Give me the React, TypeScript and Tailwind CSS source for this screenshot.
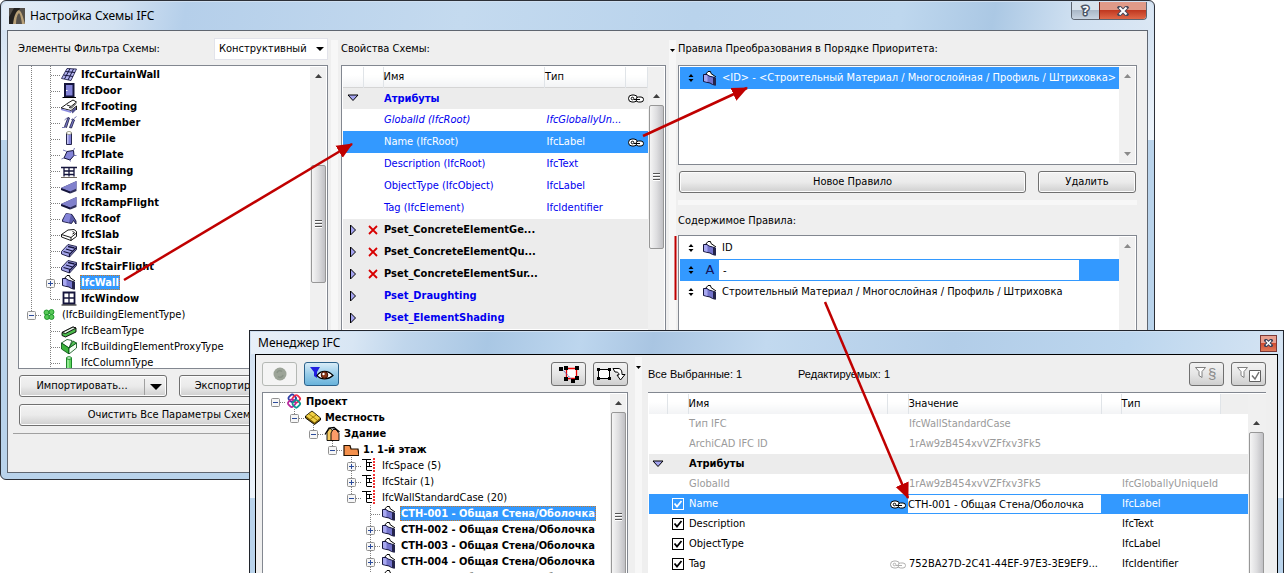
import React, { useState } from "react";

type Guide = "blank" | "line" | "tee" | "end" | "root";

type TreeNode = {
  label: string;
  icon: string;
  guides: Guide[];
  toggle?: "plus" | "minus";
  bold?: boolean;
  selected?: boolean;
};

const schemeTree: TreeNode[] = [
  { label: "IfcCurtainWall", icon: "curtain", guides: ["line", "tee"], bold: true },
  { label: "IfcDoor", icon: "door", guides: ["line", "tee"], bold: true },
  { label: "IfcFooting", icon: "footing", guides: ["line", "tee"], bold: true },
  { label: "IfcMember", icon: "member", guides: ["line", "tee"], bold: true },
  { label: "IfcPile", icon: "pile", guides: ["line", "tee"], bold: true },
  { label: "IfcPlate", icon: "plate", guides: ["line", "tee"], bold: true },
  { label: "IfcRailing", icon: "railing", guides: ["line", "tee"], bold: true },
  { label: "IfcRamp", icon: "ramp", guides: ["line", "tee"], bold: true },
  { label: "IfcRampFlight", icon: "ramp", guides: ["line", "tee"], bold: true },
  { label: "IfcRoof", icon: "roof", guides: ["line", "tee"], bold: true },
  { label: "IfcSlab", icon: "slab", guides: ["line", "tee"], bold: true },
  { label: "IfcStair", icon: "stair", guides: ["line", "tee"], bold: true },
  { label: "IfcStairFlight", icon: "stair", guides: ["line", "tee"], bold: true },
  { label: "IfcWall", icon: "wall", guides: ["line", "tee"], toggle: "plus", bold: true, selected: true },
  { label: "IfcWindow", icon: "window", guides: ["line", "end"], bold: true },
  { label: "(IfcBuildingElementType)", icon: "type", guides: ["end"], toggle: "minus" },
  { label: "IfcBeamType", icon: "beamType", guides: ["blank", "tee"] },
  { label: "IfcBuildingElementProxyType", icon: "proxyType", guides: ["blank", "tee"] },
  { label: "IfcColumnType", icon: "columnType", guides: ["blank", "tee"] },
];

const projectTree: TreeNode[] = [
  { label: "Проект", icon: "project", guides: ["root"], toggle: "minus", bold: true },
  { label: "Местность", icon: "site", guides: ["blank", "end"], toggle: "minus", bold: true },
  { label: "Здание", icon: "building", guides: ["blank", "blank", "end"], toggle: "minus", bold: true },
  { label: "1. 1-й этаж", icon: "storey", guides: ["blank", "blank", "blank", "end"], toggle: "minus", bold: true },
  { label: "IfcSpace (5)", icon: "group", guides: ["blank", "blank", "blank", "blank", "tee"], toggle: "plus" },
  { label: "IfcStair (1)", icon: "group", guides: ["blank", "blank", "blank", "blank", "tee"], toggle: "plus" },
  { label: "IfcWallStandardCase (20)", icon: "group", guides: ["blank", "blank", "blank", "blank", "end"], toggle: "minus" },
  { label: "СТН-001 - Общая Стена/Оболочка", icon: "wall", guides: ["blank", "blank", "blank", "blank", "blank", "tee"], bold: true, selected: true },
  { label: "СТН-002 - Общая Стена/Оболочка", icon: "wall", guides: ["blank", "blank", "blank", "blank", "blank", "tee"], toggle: "plus", bold: true },
  { label: "СТН-003 - Общая Стена/Оболочка", icon: "wall", guides: ["blank", "blank", "blank", "blank", "blank", "tee"], toggle: "plus", bold: true },
  { label: "СТН-004 - Общая Стена/Оболочка", icon: "wall", guides: ["blank", "blank", "blank", "blank", "blank", "tee"], toggle: "plus", bold: true },
  { label: "СТН-005 - Общая Стена/Оболочка", icon: "wall", guides: ["blank", "blank", "blank", "blank", "blank", "tee"], toggle: "plus", bold: true },
];

const schemeProps = [
  { name: "Атрибуты", type: "", kind: "open", link: true },
  { name: "GlobalId (IfcRoot)", type: "IfcGloballyUn...", kind: "italic" },
  { name: "Name (IfcRoot)", type: "IfcLabel", kind: "selected", link: true },
  { name: "Description (IfcRoot)", type: "IfcText", kind: "plain" },
  { name: "ObjectType (IfcObject)", type: "IfcLabel", kind: "plain" },
  { name: "Tag (IfcElement)", type: "IfcIdentifier", kind: "plain" },
  { name: "Pset_ConcreteElementGe...", type: "", kind: "denied" },
  { name: "Pset_ConcreteElementQu...", type: "", kind: "denied" },
  { name: "Pset_ConcreteElementSur...", type: "", kind: "denied" },
  { name: "Pset_Draughting", type: "", kind: "closed" },
  { name: "Pset_ElementShading", type: "", kind: "closed" },
];

const elementProps = [
  { name: "Тип IFC", value: "IfcWallStandardCase", type: "", kind: "disabled" },
  { name: "ArchiCAD IFC ID", value: "1rAw9zB454xvVZFfxv3Fk5", type: "", kind: "disabled" },
  { name: "Атрибуты", value: "", type: "", kind: "group" },
  { name: "GlobalId", value: "1rAw9zB454xvVZFfxv3Fk5", type: "IfcGloballyUniqueId", kind: "disabled" },
  { name: "Name", value: "СТН-001 - Общая Стена/Оболочка", type: "IfcLabel", kind: "selected" },
  { name: "Description", value: "", type: "IfcText", kind: "check" },
  { name: "ObjectType", value: "", type: "IfcLabel", kind: "check" },
  { name: "Tag", value: "752BA27D-2C41-44EF-97E3-3E9EF9...", type: "IfcIdentifier", kind: "check" },
];

const dark = "#14143c";
const blue = "#8484d8";

const icons: Record<string, React.ReactNode> = {
  curtain: (
    <g stroke={dark} strokeWidth="0.8">
      <path d="M6 2.500L15.500 3 10 14.500 0.500 12.500z" fill="#b4b4f0" />
      <path d="M9 2.500L3.500 13M12.500 3L7 14M4.500 5.500l9.500 1M2.500 9l9.500 1.500" fill="none" strokeWidth="1" />
    </g>
  ),
  door: (
    <g>
      <path d="M4 2h8.500v12.500H4z" fill={blue} stroke={dark} strokeWidth="2" />
      <path d="M1.500 15.500h13.500" stroke="#000" />
      <path d="M5 8.500h1.500" stroke="#fff" />
    </g>
  ),
  footing: (
    <g>
      <path d="M0 10l7-5 5-3 3.500 2v6L12 15 0 11.500z" fill="#fff" />
      <path d="M0 10l10 2.500L15.500 8M0 10l7-5 5-3 3.500 2L10 8.500 6 7" fill="none" stroke="#000" strokeWidth="0.900" />
      <path d="M8 9.500l2.500.500L15 5.500M15.500 8v4" fill="none" stroke="#000" strokeWidth="0.900" />
      <path d="M0 10.500l10 2.500v2L0 12z" fill="#8c8ce0" />
      <path d="M10 13l5-4v3l-3.500 3.500z" fill="#50508c" />
    </g>
  ),
  member: (
    <g stroke={dark} strokeWidth="0.800">
      <path d="M7 3.500L3.500 12.500l2 1L8.500 4zM12 5l-3.500 8.500 2 .500L13.500 6z" fill="#7c7ccc" />
      <path d="M1 13.500h3M13 4.500l2.500-2M3.500 6l3-2.500M10 6l2-1.500" stroke="#5656a0" />
    </g>
  ),
  pile: (
    <g>
      <path d="M5.500 3v11.500h5V3z" fill={blue} stroke={dark} strokeWidth="0.900" />
      <path d="M6 4h1.500v10H6z" fill="#c4c4f4" />
      <ellipse cx="8" cy="3" rx="2.500" ry="1.500" fill="#fff" stroke="#8a8a70" strokeWidth="0.800" />
    </g>
  ),
  plate: (
    <g>
      <path d="M6 5.500l6.500-1 .500 5-4 4.500-6-2z" fill={blue} stroke={dark} />
      <path d="M2 4l4 1.500M12.500 4.500L13.500 2M0.500 13l2.500-1M13 9.500l2.500 0M9 14l.500 1.500" stroke="#5656a0" strokeWidth="0.800" />
    </g>
  ),
  railing: (
    <g fill="none" stroke={dark} strokeWidth="1.300">
      <path d="M0 5.500h16M3 5.500v9M8 5.500v9M13 5.500v9M3 9h10M3 12.500h10" />
      <path d="M0 15.500h16" stroke="#706860" strokeWidth="1" />
    </g>
  ),
  ramp: (
    <g>
      <path d="M0 10L15.500 3v10l-6 2.500z" fill="#30305c" />
      <path d="M0 10L15.500 3v7.500L9 13.500z" fill="#8080cc" />
      <path d="M0 10l9 3.500v2L0 12z" fill={dark} />
    </g>
  ),
  roof: (
    <g>
      <path d="M1.500 10L5 3.500l6 1 4 6.500v3l-2.500-3.500-2 3-9-2z" fill="#5c5cac" stroke={dark} strokeWidth="0.900" />
      <path d="M5 3.500l5 1-2 8-6-1.500z" fill={blue} />
    </g>
  ),
  slab: (
    <g stroke="#000" strokeWidth="0.900">
      <path d="M0.500 8.500L7 4l6-.500 2.500 2v5L10 14.500.500 11z" fill="#fff" />
      <path d="M0.500 8.500l9.500 3 5.500-4.500M10 11.500v3M11.500 5l2 2-2 1" fill="none" />
    </g>
  ),
  stair: (
    <g stroke={dark} strokeWidth="0.900">
      <path d="M7 2.500l8.500 2v3L8.500 15 .500 12V9.500z" fill="#a4a4e8" />
      <path d="M7 4.500l6.500 1.500M5 7l6.500 2M2.500 9.500l7 2M8.500 15v-2.500l7-7" fill="none" strokeWidth="1.300" />
    </g>
  ),
  wall: (
    <g>
      <path d="M3 5l3-3.500h2.500L9 3.500 14 7" fill="#fff" stroke="#000" />
      <path d="M1.500 4.500h3.500l2 1.500 3.500 1 3 1v7l-3-.500L8 13l-6.500-1.500z" fill="#7474cc" stroke={dark} />
      <path d="M2 5h2.500l1 1v6L2 11z" fill="#a8a8f0" />
      <path d="M11 7.500l3 .500v7.500L11 15z" fill="#24244c" />
    </g>
  ),
  window: (
    <g>
      <path d="M2.500 2.500h11v11h-11z" fill="#fff" stroke={dark} strokeWidth="1.800" />
      <path d="M8 2v12M2.500 8h11" stroke={dark} strokeWidth="1.300" />
      <path d="M0.500 15h15" stroke="#000" strokeWidth="1" />
    </g>
  ),
  type: (
    <g fill="#58c858" stroke="#0c8a1c" strokeWidth="0.800">
      <circle cx="4.500" cy="6.500" r="2.500" />
      <circle cx="9.500" cy="6" r="2.500" />
      <circle cx="5" cy="11" r="2.500" />
      <circle cx="9.500" cy="11" r="2.500" />
    </g>
  ),
  beamType: (
    <g stroke="#000" strokeWidth="0.900">
      <path d="M1 10.500L12 5l3 1v4L4.500 15 1 13.500z" fill="#4cb84c" />
      <path d="M1 10.500L12 5l3 1L4.500 11.500z" fill="#e8f8e8" />
    </g>
  ),
  proxyType: (
    <g stroke="#004a10" strokeWidth="0.800">
      <path d="M0.500 5L6 1.500l5 1L8 10z" fill="#fff" />
      <path d="M0.500 5L8 10v6L.500 11z" fill="#3cb43c" />
      <path d="M8 10l7.500-5v5L8 16z" fill="#f2fff2" />
      <path d="M8 10l4-7 3.500 2z" fill="#58c858" />
    </g>
  ),
  columnType: (
    <g stroke="#0a7a1a" strokeWidth="0.900">
      <path d="M5.500 4v11.500h5V4z" fill="#5ed45e" />
      <path d="M7 5v10" stroke="#d0ffd0" />
      <ellipse cx="8" cy="4" rx="2.500" ry="1.300" fill="#d8ffd8" />
    </g>
  ),
  project: (
    <g fill="none" strokeWidth="1.800">
      <rect x="3" y="2" width="6.500" height="6.500" rx="2" stroke="#3040a8" transform="rotate(45 6.200 5.200)" />
      <rect x="7" y="2.500" width="6.500" height="6.500" rx="2" stroke="#f02848" transform="rotate(45 10.200 5.800)" />
      <rect x="2.500" y="7" width="6.500" height="6.500" rx="2" stroke="#b8289c" transform="rotate(45 5.800 10.200)" />
      <rect x="7" y="7.500" width="6.500" height="6.500" rx="2" stroke="#109890" transform="rotate(45 10.200 10.800)" />
    </g>
  ),
  site: (
    <g strokeWidth="0.900">
      <path d="M0.500 7L7 2l8.500 7v2L9.500 15.500.500 9z" fill="#7a5c00" stroke="#000" />
      <path d="M1 7l6-4.500L15 9l-5.500 4.500z" fill="#f0d048" />
      <path d="M5 10.500L11 6M4 5l8 6" stroke="#9a7800" />
    </g>
  ),
  building: (
    <g stroke="#000" strokeWidth="0.900">
      <path d="M3 7l3-4 3.500 4v8.500H3z" fill="#f4c860" />
      <path d="M7 15.500V8l2-3.500h3l3 4v7z" fill="#fc9c68" />
      <path d="M1 9.500L5 3l5-.500L15.500 7" fill="none" strokeWidth="1.300" />
    </g>
  ),
  storey: <path d="M1 4.500h6l1 3.500h7l1 6.500H1z" fill="#f4904c" stroke="#201000" strokeWidth="1.200" />,
  group: (
    <g fill="none">
      <path d="M0 2.500h9M4.500 2.500v11M5 5.500h5M7.500 5.500v4M5 9.500h5M5 13.500h5" stroke="#000" />
      <path d="M12 1v15" stroke="#f00000" strokeWidth="1.600" strokeDasharray="2 1" />
    </g>
  ),
};

const Icon = ({ name }: { name: string }) => (
  <svg viewBox="0 0 16 16" className="h-4 w-4 shrink-0" aria-hidden="true">
    {icons[name]}
  </svg>
);

const GuideCell = ({ guide, toggle }: { guide: Guide; toggle?: "plus" | "minus" }) => {
  const horizontal = guide === "tee" || guide === "end" || guide === "root";
  return (
    <svg viewBox="0 0 19 16" className="h-4 w-[19px] shrink-0" aria-hidden="true">
      {(guide === "line" || guide === "tee") && <path d="M9.500 0v16" stroke="#808080" strokeDasharray="1 1" />}
      {guide === "end" && <path d="M9.500 0v9" stroke="#808080" strokeDasharray="1 1" />}
      {horizontal && <path d="M10 9.500h9" stroke="#808080" strokeDasharray="1 1" />}
      {toggle && (
        <g>
          <rect x="5.500" y="5.500" width="8" height="8" rx="1" fill="#f6f6f6" stroke="#919191" />
          <path d="M7 9.500h5" stroke="#2b4b9b" />
          {toggle === "plus" && <path d="M9.500 7v5" stroke="#2b4b9b" />}
        </g>
      )}
    </svg>
  );
};

const Tree = ({ nodes }: { nodes: TreeNode[] }) => (
  <ul className="min-w-0 flex-1 overflow-hidden pl-[3px]">
    {nodes.map((node) => (
      <li key={node.label} className="flex h-4 items-center whitespace-nowrap">
        {node.guides.map((guide, i) => (
          <GuideCell key={i} guide={guide} toggle={i === node.guides.length - 1 ? node.toggle : undefined} />
        ))}
        <span className="ml-px flex items-center gap-[3px]">
          <Icon name={node.icon} />
          <span
            className={`px-px pt-px leading-[14px] ${node.bold ? "font-bold" : ""} ${
              node.selected ? "bg-[#3399ff] text-white outline-1 -outline-offset-1 outline-dotted outline-[#c87828]" : ""
            }`}
          >
            {node.label}
          </span>
        </span>
      </li>
    ))}
  </ul>
);

const Triangle = ({ dir, className }: { dir: "up" | "down"; className?: string }) => (
  <svg viewBox="0 0 7 4" className={`h-1 w-[7px] ${className ?? ""}`} aria-hidden="true">
    <path d={dir === "up" ? "M0 4l3.500-4L7 4z" : "M0 0l3.500 4L7 0z"} fill="currentColor" />
  </svg>
);

// offset and thumb are the classes that size the gap over the thumb and the thumb itself
const ScrollBar = ({ offset = "h-0", thumb, muted }: { offset?: string; thumb?: string; muted?: boolean }) => (
  <div className={`flex w-4 shrink-0 flex-col items-center bg-[#f0f0f0] ${muted ? "text-[#8a8a8a]" : "text-[#404040]"}`}>
    <div className="flex h-[18px] shrink-0 items-center">
      <Triangle dir="up" />
    </div>
    <div className={`shrink-0 ${offset}`} />
    {thumb && (
      <div
        className={`flex w-[15px] shrink-0 flex-col items-center justify-center gap-px rounded-xs border border-[#979797] bg-linear-to-r from-[#f5f5f5] via-[#dedee0] to-[#c0c0c4] ${thumb}`}
      >
        <span className="h-0.5 w-[7px] border-t border-[#555] bg-white" />
        <span className="h-0.5 w-[7px] border-t border-[#555] bg-white" />
        <span className="h-0.5 w-[7px] border-t border-[#555] bg-white" />
      </div>
    )}
    <div className="flex-1" />
    <div className="flex h-[18px] shrink-0 items-center">
      <Triangle dir="down" />
    </div>
  </div>
);

const Chain = ({ faded }: { faded?: boolean }) => (
  <svg viewBox="0 0 16 9" className={`h-[9px] w-4 ${faded ? "opacity-30" : ""}`} aria-hidden="true">
    <rect x="0.500" y="1" width="9" height="7" rx="3.500" fill="#fff" stroke="#000" />
    <rect x="8" y="3" width="7.500" height="5" rx="2.500" fill="#fff" stroke="#000" />
    <circle cx="4.500" cy="4.500" r="1.300" fill="#fff" stroke="#000" />
    <path d="M6 5.500h6" stroke="#000" />
  </svg>
);

const OpenMark = () => (
  <svg viewBox="0 0 12 8" className="h-2 w-3" aria-hidden="true">
    <path d="M1 1h10L6 6.500z" fill="#a4a4f0" stroke="#000" />
  </svg>
);

const ClosedMark = () => (
  <svg viewBox="0 0 8 12" className="h-3 w-2" aria-hidden="true">
    <path d="M1.500 1v10l5-5z" fill="#a4a4f0" stroke="#000" />
  </svg>
);

const SortMark = () => (
  <svg viewBox="0 0 6 10" className="h-2.5 w-1.5 shrink-0" aria-hidden="true">
    <path d="M0.500 4L3 1l2.500 3zM0.500 6L3 9l2.500-3z" fill="#000" />
  </svg>
);

const PushButton = ({ children, className }: { children: React.ReactNode; className: string }) => (
  <button
    className={`flex h-[22px] items-center justify-center overflow-hidden rounded-[3px] border border-[#707070] bg-linear-to-b from-[#f2f2f2] from-0% via-[#ebebeb] via-50% to-[#cfcfcf] pt-px whitespace-nowrap shadow-[inset_0_0_0_1px_#fcfcfc] ${className}`}
  >
    {children}
  </button>
);

const MenuButton = ({ label }: { label: string }) => (
  <PushButton className="w-[148px]">
    <span className="flex-1">{label}</span>
    <span className="flex h-4 w-[22px] items-center justify-center border-l border-[#a0a0a0]">
      <svg viewBox="0 0 12 6" className="h-1.5 w-3" aria-hidden="true">
        <path d="M0 0h12L6 6z" fill="#000" />
      </svg>
    </span>
  </PushButton>
);

const ToolButton = ({ label, state = "normal", children }: { label: string; state?: string; children: React.ReactNode }) => {
  const look =
    state === "active"
      ? "border-[#2c628b] bg-linear-to-b from-[#d8ecf8] via-[#98cce8] to-[#68b3db]"
      : state === "disabled"
        ? "border-[#b4b8b4] bg-[#f4f4f4]"
        : "border-[#707070] bg-linear-to-b from-[#f2f2f2] via-[#e6e6e6] to-[#cfcfcf]";
  return (
    <button aria-label={label} className={`flex h-6 w-[35px] items-center justify-center rounded-[3px] border ${look}`}>
      {children}
    </button>
  );
};

const Splitter = ({ className, marker }: { className: string; marker?: boolean }) => (
  <div className={`flex shrink-0 flex-col items-center ${className}`}>
    <div className="flex w-[7px] flex-1 justify-center bg-[#f7f7f7]">
      {marker && (
        <svg viewBox="0 0 5 3" className="mt-[9px] h-[3px] w-[5px]" aria-hidden="true">
          <path d="M0 0h5L2.500 3z" fill="#000" />
        </svg>
      )}
    </div>
  </div>
);

const headCell = "border-r border-[#e0e4e8] bg-linear-to-b from-white from-40% to-[#f2f3f5] pt-px text-left font-normal";

const SchemeTable = () => (
  <table className="min-w-0 flex-1 table-fixed border-collapse">
    <colgroup>
      <col className="w-5" />
      <col className="w-5" />
      <col />
      <col className="w-[81px]" />
      <col className="w-[22px]" />
    </colgroup>
    <thead>
      <tr className="h-5 border-b border-[#d5d5d5]">
        <th className={headCell} />
        <th className={headCell} />
        <th className={headCell}>Имя</th>
        <th className={headCell}>Тип</th>
        <th className={headCell} />
      </tr>
    </thead>
    <tbody>
      {schemeProps.map((row) => {
        const group = row.kind === "open" || row.kind === "closed" || row.kind === "denied";
        const tone =
          row.kind === "selected" ? "bg-[#3399ff] text-white" : row.kind === "denied" ? "text-black" : "text-[#0000f0]";
        return (
          <tr
            key={row.name}
            className={`h-[22px] whitespace-nowrap ${tone} ${group ? "bg-[#ececec] font-bold" : ""} ${
              row.kind === "italic" ? "italic" : ""
            }`}
          >
            <td>
              <span className="flex justify-center">
                {row.kind === "open" && <OpenMark />}
                {(row.kind === "closed" || row.kind === "denied") && <ClosedMark />}
              </span>
            </td>
            <td>
              {row.kind === "denied" && (
                <svg viewBox="0 0 10 10" className="mx-auto h-2.5 w-2.5" aria-hidden="true">
                  <path d="M1 1l8 8M9 1L1 9" stroke="#d80000" strokeWidth="1.800" />
                </svg>
              )}
            </td>
            <td className="pt-px pl-px">{row.name}</td>
            <td className="pt-px pl-0.5">{row.type}</td>
            <td>
              <span className="flex justify-end pr-1">{row.link && <Chain />}</span>
            </td>
          </tr>
        );
      })}
    </tbody>
  </table>
);

const ElementTable = () => {
  const [name, setName] = useState(elementProps[4].value);
  const [checked, setChecked] = useState<Record<string, boolean>>({
    Name: true,
    Description: true,
    ObjectType: true,
    Tag: true,
  });

  return (
    <table className="min-w-0 flex-1 table-fixed border-collapse">
      <colgroup>
        <col className="w-[18px]" />
        <col className="w-[21px]" />
        <col className="w-[199px]" />
        <col className="w-[21px]" />
        <col />
        <col className="w-5" />
        <col className="w-[99px]" />
        <col className="w-7" />
      </colgroup>
      <thead>
        <tr className="h-5">
          <th className={headCell} />
          <th className={headCell} />
          <th className={headCell}>Имя</th>
          <th className={headCell} />
          <th className={headCell}>Значение</th>
          <th className={headCell} />
          <th className={headCell}>Тип</th>
          <th className="bg-[#efefef]" />
        </tr>
      </thead>
      <tbody>
        {elementProps.map((row) => {
          const selected = row.kind === "selected";
          const tone =
            row.kind === "disabled"
              ? "text-[#9a9a9a]"
              : selected
                ? "bg-[#3399ff] text-white"
                : row.kind === "group"
                  ? "bg-[#ececec] font-bold"
                  : "";
          return (
            <tr key={row.name} className={`h-5 whitespace-nowrap ${tone}`}>
              <td>
                <span className="flex justify-center">{row.kind === "group" && <OpenMark />}</span>
              </td>
              <td>
                {row.name in checked && (
                  <span className="relative flex justify-center">
                    <input
                      type="checkbox"
                      aria-label={row.name}
                      checked={checked[row.name]}
                      onChange={() => setChecked({ ...checked, [row.name]: !checked[row.name] })}
                      className={`h-3 w-3 appearance-none border ${selected ? "border-white" : "border-black bg-white"}`}
                    />
                    {checked[row.name] && (
                      <svg viewBox="0 0 12 12" className="pointer-events-none absolute h-3 w-3" aria-hidden="true">
                        <path d="M2.500 5.500l2.500 3 4.500-5.500" fill="none" stroke="currentColor" strokeWidth="1.800" />
                      </svg>
                    )}
                  </span>
                )}
              </td>
              <td className="pt-px pl-px">{row.name}</td>
              <td>
                <span className="flex justify-center">
                  {(selected || row.name === "Tag") && <Chain faded={!selected} />}
                </span>
              </td>
              <td className={selected ? "" : "pt-px pl-px"}>
                {selected ? (
                  <input
                    aria-label="Значение"
                    value={name}
                    onChange={(e) => setName(e.target.value)}
                    className="block h-[18px] w-full bg-white text-black outline-none"
                  />
                ) : (
                  row.value
                )}
              </td>
              <td />
              <td className="pt-px pl-px">{row.type}</td>
              <td />
            </tr>
          );
        })}
      </tbody>
    </table>
  );
};

const RuleRow = ({ children, icon = "wall", selected }: { children: React.ReactNode; icon?: string; selected?: boolean }) => (
  <li className={`flex h-[22px] items-center pl-2 whitespace-nowrap ${selected ? "bg-[#3399ff] text-white" : ""}`}>
    <SortMark />
    <span className="ml-2 flex w-4 shrink-0 justify-center">
      {icon === "text" ? <span className="font-['DejaVu_Sans'] text-[13px] text-[#14145a]">A</span> : <Icon name={icon} />}
    </span>
    {children}
  </li>
);

const SchemeWindow = () => {
  const [filter, setFilter] = useState("Конструктивный");
  const [separator, setSeparator] = useState("-");

  return (
    <section className="absolute top-0 right-[129px] left-0 flex flex-col rounded-md border border-[#2c3038] bg-linear-to-b from-[#cfdff0] from-0% via-[#edf4fb] via-29% to-[#b9d3eb] to-29% p-px">
      <header className="flex h-7 items-start justify-between rounded-t-md bg-linear-[100deg,#e4edf7_0%,#d3e2f2_10%,#b5cfea_16%,#c4daef_40%,#b9d3ec_60%,#bed7ee_78%,#abc8e4_86%,#cfe0f1_93%,#dbe7f4_100%] pr-1.5 pl-[7px]">
        <div className="flex h-full items-center gap-[5px]">
          <svg viewBox="0 0 16 16" className="h-4 w-4" aria-hidden="true">
            <path d="M0 0h16v16H0z" fill="#55504a" />
            <path d="M0 9l5-9h6L5 16H0z" fill="#242220" />
            <path d="M4 16C5 8 7 3 10 2c3 2 4 7 6 14h-3C12 9 11 6 10 5 8 7 7 11 7 16z" fill="#b8a078" />
          </svg>
          <h1 className="font-['Noto_Sans'] text-xs">Настройка Схемы IFC</h1>
        </div>
        <div className="flex h-[18px] overflow-hidden rounded-b-[4px] border border-t-0 border-[#5c6470]">
          <button aria-label="Справка" className="flex w-[27px] items-center justify-center bg-linear-to-b from-[#d8e2ec] from-45% via-[#aab8c8] via-50% to-[#c8d4e2]">
            <span className="font-['Open_Sans'] text-[13px] leading-none font-bold text-white [-webkit-text-stroke:3px_#4a5568] [paint-order:stroke_fill]">?</span>
          </button>
          <button aria-label="Закрыть" className="flex w-[47px] items-center justify-center border-l border-[#7a2418] bg-linear-to-b from-[#e09a88] from-45% via-[#c03820] via-50% to-[#e06848]">
            <svg viewBox="0 0 12 10" className="h-2.5 w-3" aria-hidden="true">
              <path d="M2.500 1.500l7 7M9.500 1.500l-7 7" stroke="#4a4a5a" strokeWidth="4" strokeLinecap="square" />
              <path d="M2.500 1.500l7 7M9.500 1.500l-7 7" stroke="#fff" strokeWidth="2" />
            </svg>
          </button>
        </div>
      </header>

      <div className="mx-[5px] mb-[5px] border border-[#5f6670] bg-[#efefef] pt-[7px] pb-[38px]">
        <div className="flex px-2.5">
          <div className="flex w-[310px] shrink-0 flex-col">
            <div className="mb-[5px] flex h-[22px] items-center justify-between">
              <label htmlFor="filter" className="pt-px">Элементы Фильтра Схемы:</label>
              <div className="relative flex items-center">
                <select
                  id="filter"
                  value={filter}
                  onChange={(e) => setFilter(e.target.value)}
                  className="h-[22px] w-[114px] appearance-none border border-[#e2e3ea] bg-white pl-1"
                >
                  <option>Конструктивный</option>
                  <option>Все</option>
                </select>
                <svg viewBox="0 0 8 4" className="pointer-events-none absolute right-1 h-1 w-2" aria-hidden="true">
                  <path d="M0 0h8L4 4z" fill="#000" />
                </svg>
              </div>
            </div>
            <div className="flex h-[304px] overflow-hidden border border-[#828790] bg-white">
              <Tree nodes={schemeTree} />
              <div className="flex py-px pr-px">
                <ScrollBar offset="h-20" thumb="h-[118px]" />
              </div>
            </div>
            <div className="mt-1.5 flex justify-between px-px">
              <MenuButton label="Импортировать..." />
              <MenuButton label="Экспортировать..." />
            </div>
            <PushButton className="mx-px mt-[7px]">Очистить Все Параметры Схемы</PushButton>
          </div>

          <Splitter className="w-[13px] pt-0.5" />

          <div className="flex w-[325px] shrink-0 flex-col">
            <h2 className="mb-[5px] flex h-[22px] items-center pt-px">Свойства Схемы:</h2>
            <div className="flex flex-1 border border-[#828790] bg-white p-px">
              <div className="flex min-w-0 flex-1 items-start">
                <SchemeTable />
              </div>
              <div className="flex bg-[#f0f0f0] pt-5">
                <ScrollBar thumb="h-36" />
              </div>
            </div>
          </div>

          <Splitter className="w-3 pt-0.5" marker />

          <div className="flex min-w-0 flex-1 flex-col">
            <h2 className="mb-[5px] flex h-[22px] items-center pt-px">Правила Преобразования в Порядке Приоритета:</h2>
            <div className="flex h-[100px] border border-[#828790] bg-white p-px">
              <ul className="min-w-0 flex-1 overflow-hidden">
                <RuleRow selected>
                  <span className="pt-px pl-1">&lt;ID&gt; - &lt;Строительный Материал / Многослойная / Профиль / Штриховка&gt;</span>
                </RuleRow>
              </ul>
              <ScrollBar muted />
            </div>
            <div className="mt-1.5 flex gap-3 px-px">
              <PushButton className="flex-1">Новое Правило</PushButton>
              <PushButton className="w-[98px]">Удалить</PushButton>
            </div>
            <div className="mt-[7px] h-[5px] bg-[#f7f7f7]" />
            <h2 className="mt-[5px] mb-[3px] flex h-[22px] items-center pt-px">Содержимое Правила:</h2>
            <div className="flex flex-1 border border-[#828790] bg-white p-px">
              <ul className="min-w-0 flex-1 overflow-hidden">
                <RuleRow>
                  <span className="pt-px pl-1">ID</span>
                </RuleRow>
                <RuleRow selected icon="text">
                  <input
                    aria-label="Текст"
                    value={separator}
                    onChange={(e) => setSeparator(e.target.value)}
                    className="mr-10 ml-px h-5 min-w-0 flex-1 bg-white pl-1 text-black outline-none"
                  />
                </RuleRow>
                <RuleRow>
                  <span className="pt-px pl-1">Строительный Материал / Многослойная / Профиль / Штриховка</span>
                </RuleRow>
              </ul>
              <ScrollBar muted />
            </div>
          </div>
        </div>
        <hr className="mx-[5px] mt-[7px] border-[#a0a0a0]" />
      </div>
    </section>
  );
};

const Funnel = ({ children }: { children: React.ReactNode }) => (
  <svg viewBox="0 0 28 18" className="h-[18px] w-7" fill="none" aria-hidden="true">
    <path d="M2.500 2.500h10L9 6.500v6l-3-2v-4z" fill="#fff" stroke="#808080" />
    {children}
  </svg>
);

const ManagerWindow = () => (
  <section className="absolute top-[330px] right-0 bottom-0 left-[249px] flex flex-col overflow-hidden border border-b-0 border-[#20242c] bg-linear-to-b from-[#cfdff0] from-0% via-[#edf4fb] via-69% to-[#b9d3eb] to-69% pt-px">
    <header className="mx-px flex h-[22px] shrink-0 items-center justify-between bg-linear-[100deg,#e8f0f8_0%,#d8e6f4_10%,#c0d6ec_15%,#a9c7e4_23%,#bdd6ee_32%,#a9c5e2_39%,#c2d9ef_50%,#b2cde8_68%,#bcd6ee_85%,#d5e4f3_100%] pr-[5px] pl-[7px]">
      <h1 className="font-['Noto_Sans'] text-xs">Менеджер IFC</h1>
      <button aria-label="Закрыть" className="flex h-[17px] w-[17px] items-center justify-center border border-[#7a3a38] bg-linear-to-b from-[#e8a090] from-45% via-[#d04c30] via-50% to-[#e07858]">
        <svg viewBox="0 0 9 8" className="h-2 w-[9px]" aria-hidden="true">
          <path d="M2 1.500l5 5M7 1.500l-5 5" stroke="#384058" strokeWidth="3.500" strokeLinecap="square" />
          <path d="M2 1.500l5 5M7 1.500l-5 5" stroke="#fff" strokeWidth="1.500" />
        </svg>
      </button>
    </header>

    <div className="mx-[5px] flex min-h-0 flex-1 border border-b-0 border-black bg-[#efefef] px-1.5">
      <div className="flex w-[366px] shrink-0 flex-col pt-[7px]">
        <div className="mb-1.5 flex gap-[7px]">
          <ToolButton label="Обновить" state="disabled">
            <svg viewBox="0 0 16 16" className="h-4 w-4" aria-hidden="true">
              <circle cx="8" cy="8" r="6.500" fill="#9ca498" />
              <path d="M5 7a3 3 0 0 1 5-1.500M11 9a3 3 0 0 1-5 1.500" fill="none" stroke="#8a9488" strokeWidth="1.500" />
            </svg>
          </ToolButton>
          <ToolButton label="Фильтр показа" state="active">
            <svg viewBox="0 0 24 16" className="h-4 w-6" aria-hidden="true">
              <path d="M0 1h10L7 6v6l-3-2V6z" fill="#2020e0" />
              <path d="M7 9.500c4-5.500 11-5.500 16 0-5 4.500-12 4.500-16 0z" fill="#fff" stroke="#000" strokeWidth="1.200" />
              <circle cx="14.500" cy="9" r="3.300" fill="#8c3818" stroke="#401000" />
              <circle cx="13.500" cy="8" r="1.200" fill="#fff" />
            </svg>
          </ToolButton>
          <div className="flex-1" />
          <ToolButton label="Выбрать в проекте">
            <svg viewBox="0 0 22 18" className="h-[18px] w-[22px]" aria-hidden="true">
              <path d="M8.500 3.500h10v10h-10z" fill="#fff" stroke="#f00000" strokeWidth="1.300" />
              <path d="M4 4l11 12" stroke="#4060c0" strokeDasharray="2 1" />
              <path d="M1 2h4v4H1zM6 1h4v4H6zM17 1h4v4h-4zM6 12h4v4H6zM17 11h4v4h-4zM13 14h4v4h-4z" fill="#000" />
            </svg>
          </ToolButton>
          <ToolButton label="Перейти">
            <svg viewBox="0 0 30 16" className="h-4 w-[30px]" aria-hidden="true">
              <path d="M2.500 3.500h11v9h-11z" fill="#fff" stroke="#000" />
              <path d="M1 2h3v3H1zM12 2h3v3h-3zM1 11h3v3H1zM12 11h3v3h-3z" fill="#000" />
              <path d="M17 2.500h5c3 0 4 2 4 6h3l-4.500 5.500L21 9h2c0-2-1-3-3-3h-1z" fill="#fff" stroke="#000" />
            </svg>
          </ToolButton>
        </div>
        <div className="flex min-h-0 flex-1 overflow-hidden border border-b-0 border-[#828790] bg-white">
          <Tree nodes={projectTree} />
          <div className="flex pt-px pr-px">
            <ScrollBar thumb="h-[210px]" />
          </div>
        </div>
      </div>

      <Splitter className="w-5 pt-0.5" marker />

      <div className="flex min-w-0 flex-1 flex-col pr-[5px] pt-[7px]">
        <div className="mb-1.5 flex items-center font-['Liberation_Sans'] text-[11px]">
          <p className="w-[150px]">Все Выбранные: 1</p>
          <p className="flex-1">Редактируемых: 1</p>
          <div className="flex gap-[7px]">
            <ToolButton label="Правила фильтра">
              <Funnel>
                <text x="15" y="14" fill="#8a8a8a" fontSize="15" fontFamily="Liberation Sans, sans-serif">§</text>
              </Funnel>
            </ToolButton>
            <ToolButton label="Настройка фильтра">
              <Funnel>
                <path d="M14.500 5.500h11v11h-11z" fill="#fff" stroke="#606060" />
                <path d="M17 10.500l3 3.500 4-7" stroke="#707070" strokeWidth="1.500" />
              </Funnel>
            </ToolButton>
          </div>
        </div>
        <div className="flex min-h-0 flex-1 overflow-hidden border-t border-[#828790] bg-white pt-px pl-px">
          <div className="flex min-w-0 flex-1 items-start">
            <ElementTable />
          </div>
          <div className="flex bg-[#f0f0f0] pt-5 pr-0.5">
            <ScrollBar thumb="h-[300px]" />
          </div>
        </div>
      </div>
    </div>
  </section>
);

const Arrows = () => (
  <svg viewBox="0 0 1284 573" className="pointer-events-none absolute top-0 left-0 h-[573px] w-[1284px]" aria-hidden="true">
    <defs>
      <marker id="head" markerUnits="userSpaceOnUse" markerWidth="16" markerHeight="16" refX="15" refY="8" orient="auto">
        <path d="M0 1L16 8 0 15z" fill="#c00000" />
      </marker>
    </defs>
    <g stroke="#c00000" strokeWidth="2.500">
      <path d="M124 280L352 144" markerEnd="url(#head)" />
      <path d="M643 136L747 88" markerEnd="url(#head)" />
      <path d="M825 302L908 498" markerEnd="url(#head)" />
      <path d="M675.500 236v64" strokeWidth="2" />
    </g>
  </svg>
);

const App = () => {
  return (
    <main className="relative h-screen overflow-hidden bg-white font-['DejaVu_Sans_Condensed','Noto_Sans',sans-serif] text-[11px] text-black">
      <SchemeWindow />
      <ManagerWindow />
      <Arrows />
    </main>
  );
};

export default App;
